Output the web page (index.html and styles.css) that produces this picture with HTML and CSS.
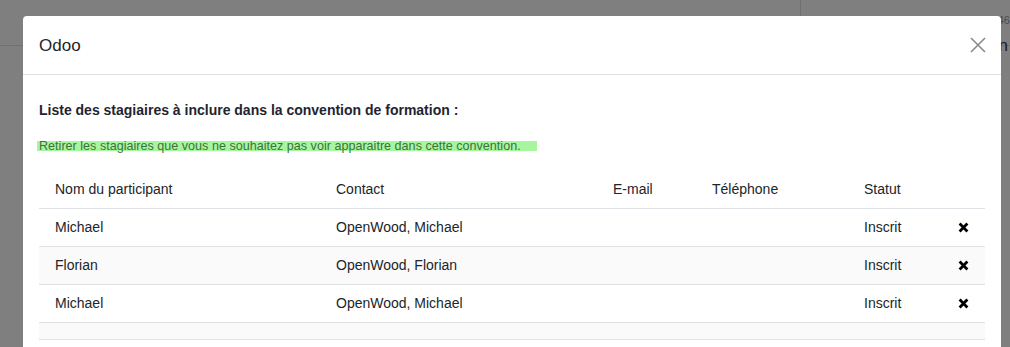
FILE: index.html
```html
<!DOCTYPE html>
<html lang="fr">
<head>
<meta charset="utf-8">
<title>Odoo</title>
<link rel="stylesheet" href="styles.css">
</head>
<body>
<div class="page">
  <div class="page-top">
    <div class="page-top-left"></div>
    <div class="page-top-right">
      <span class="small-num">46</span>
    </div>
  </div>
  <div class="page-sub"><span class="sub-letter">n</span></div>
</div>

<div class="modal">
  <div class="modal-header">
    <h4 class="modal-title">Odoo</h4>
    <button class="close-btn" aria-label="Fermer">
      <svg width="16" height="16" viewBox="0 0 16 16"><path d="M1 1 L15 15 M15 1 L1 15" stroke="#8a8a8a" stroke-width="1.6" fill="none"/></svg>
    </button>
  </div>
  <div class="modal-body">
    <div class="intro">Liste des stagiaires à inclure dans la convention de formation :</div>
    <div class="hint-line"><span class="hint">Retirer les stagiaires que vous ne souhaitez pas voir apparaitre dans cette convention.</span></div>
    <table class="list">
      <colgroup>
        <col class="c1"><col class="c2"><col class="c3"><col class="c4"><col class="c5"><col class="c6">
      </colgroup>
      <thead>
        <tr><th>Nom du participant</th><th>Contact</th><th>E-mail</th><th>Téléphone</th><th>Statut</th><th></th></tr>
      </thead>
      <tbody>
        <tr><td>Michael</td><td>OpenWood, Michael</td><td></td><td></td><td>Inscrit</td><td class="del"><svg width="11" height="11" viewBox="0 0 11 11"><path d="M1.6 1.6 L9.4 9.4 M9.4 1.6 L1.6 9.4" stroke="#000" stroke-width="2.8" stroke-linecap="butt"/></svg></td></tr>
        <tr class="odd"><td>Florian</td><td>OpenWood, Florian</td><td></td><td></td><td>Inscrit</td><td class="del"><svg width="11" height="11" viewBox="0 0 11 11"><path d="M1.6 1.6 L9.4 9.4 M9.4 1.6 L1.6 9.4" stroke="#000" stroke-width="2.8" stroke-linecap="butt"/></svg></td></tr>
        <tr><td>Michael</td><td>OpenWood, Michael</td><td></td><td></td><td>Inscrit</td><td class="del"><svg width="11" height="11" viewBox="0 0 11 11"><path d="M1.6 1.6 L9.4 9.4 M9.4 1.6 L1.6 9.4" stroke="#000" stroke-width="2.8" stroke-linecap="butt"/></svg></td></tr>
        <tr class="odd empty"><td></td><td></td><td></td><td></td><td></td><td></td></tr>
      </tbody>
    </table>
  </div>
</div>
</body>
</html>
```

FILE: styles.css
```css
html, body {
  margin: 0;
  padding: 0;
  height: 100%;
  overflow: hidden;
}
body {
  background: #7f7f7f;
  font-family: "Liberation Sans", Arial, sans-serif;
  position: relative;
}
.page-top {
  display: flex;
  height: 45px;
  border-bottom: 1px solid #6f7072;
}
.page-top-left {
  width: 800px;
  border-right: 1px solid #6f7072;
}
.page-top-right {
  flex: 1;
  display: flex;
  justify-content: flex-end;
  padding-top: 14px;
  height: 14px;
}
.small-num {
  font-size: 11px;
  color: #4a4a4a;
  line-height: 12px;
}
.page-sub {
  display: flex;
  justify-content: flex-end;
  margin-top: -10px;
}
.sub-letter {
  font-size: 17px;
  color: #1a1a1a;
  line-height: 20px;
  margin-right: 2px;
}

.modal {
  position: absolute;
  left: 23px;
  top: 16px;
  width: 978px;
  height: 400px;
  background: #fff;
  border-radius: 4px 4px 0 0;
  color: #212529;
}
.modal-header {
  height: 59px;
  box-sizing: border-box;
  border-bottom: 1px solid #dee2e6;
  display: flex;
  align-items: center;
  justify-content: space-between;
  padding: 0 14px 0 16px;
}
.modal-title {
  margin: 2px 0 0 0;
  font-size: 17px;
  font-weight: 400;
  line-height: 24px;
  color: #212529;
}
.close-btn {
  border: 0;
  background: transparent;
  padding: 0;
  width: 16px;
  height: 16px;
  display: flex;
  margin-top: 0;
  margin-right: 1px;
}
.modal-body {
  padding: 16px 16px 0 16px;
}
.intro {
  margin-top: 9px;
  font-size: 14px;
  font-weight: 700;
  line-height: 20px;
  color: #1f2430;
}
.hint-line {
  margin-top: 21px;
  height: 10px;
  margin-left: -2px;
}
.hint {
  display: inline-block;
  height: 10px;
  line-height: 10px;
  padding: 0 16px 0 2px;
  background: #a8f5a0;
  color: #3d723d;
  font-family: "Liberation Sans", Arial, sans-serif;
  font-size: 12.6px;
  vertical-align: top;
}
.list {
  margin-top: 20px;
  width: 946px;
  border-collapse: collapse;
  table-layout: fixed;
  font-size: 14px;
}
.c1 { width: 281px; }
.c2 { width: 277px; }
.c3 { width: 99px; }
.c4 { width: 152px; }
.c5 { width: 94px; }
.c6 { width: 43px; }
.list th, .list td {
  padding: 0 16px 2px 16px;
  height: 35px;
  text-align: left;
  font-weight: 400;
  border-bottom: 1px solid #dee2e6;
  color: #212529;
  vertical-align: middle;
  white-space: nowrap;
}
.list td.del {
  padding: 0 0 2px 0;
  text-align: center;
}
.list td.del svg {
  display: inline-block;
  vertical-align: middle;
  margin-left: -1px;
}
.list tr.odd td {
  background: #fafafa;
}
.list tr.empty td {
  height: 14px;
}
```
